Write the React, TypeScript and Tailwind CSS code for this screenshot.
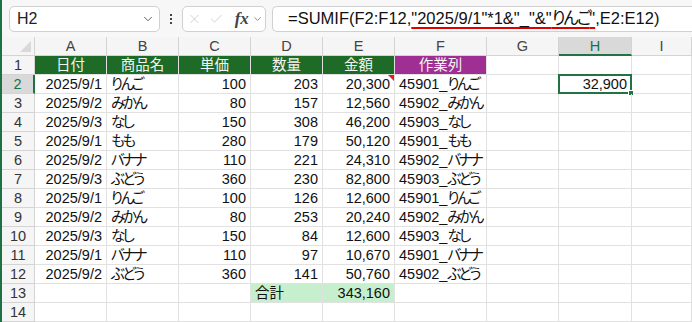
import { ChevronDown, X, Check } from 'lucide-react';

type Row = [string, string, string, string, string, string];

const rows: Row[] = [
  ['2025/9/1', 'りんご', '100', '203', '20,300', '45901_りんご'],
  ['2025/9/2', 'みかん', '80', '157', '12,560', '45902_みかん'],
  ['2025/9/3', 'なし', '150', '308', '46,200', '45903_なし'],
  ['2025/9/1', 'もも', '280', '179', '50,120', '45901_もも'],
  ['2025/9/2', 'バナナ', '110', '221', '24,310', '45902_バナナ'],
  ['2025/9/3', 'ぶどう', '360', '230', '82,800', '45903_ぶどう'],
  ['2025/9/1', 'りんご', '100', '126', '12,600', '45901_りんご'],
  ['2025/9/2', 'みかん', '80', '253', '20,240', '45902_みかん'],
  ['2025/9/3', 'なし', '150', '84', '12,600', '45903_なし'],
  ['2025/9/1', 'バナナ', '110', '97', '10,670', '45901_バナナ'],
  ['2025/9/2', 'ぶどう', '360', '141', '50,760', '45902_ぶどう'],
];

const cols = ['A', 'B', 'C', 'D', 'E', 'F', 'G', 'H', 'I'];
// corner, A-E, F (wider), G, H, I
const gridCols = 'grid grid-cols-[33px_72px_72px_72px_72px_72px_92px_72px_73px_1fr]';
const cell = 'h-[19px] border-r border-b border-[#e1e1e1] px-[4px] leading-[18px] whitespace-nowrap';
const rowHead = 'h-[19px] border-r border-b border-[#d4d4d4] bg-[#f5f5f5] text-center leading-[18px] text-[#333]';

// kana in the sheet font is narrower than Noto's, so tighten it
function Txt({ s }: { s: string }) {
  return (
    <>
      {s.split(/([\u3040-\u30ff]+)/).map((p, i) =>
        /[\u3040-\u30ff]/.test(p) ? (
          <span key={i} className="tracking-[-2.5px]">{p}</span>
        ) : (
          p
        )
      )}
    </>
  );
}

function FormulaBar() {
  return (
    <div className="flex h-[37px] items-center bg-[#f7f7f7] pl-[7px]">
      <div className="flex h-[26px] w-[151px] items-center justify-between rounded-[5px] border border-[#d0d0d0] bg-white pl-[7px] pr-[4px] text-[16px] text-[#222]">
        <span>H2</span>
        <ChevronDown size={14} strokeWidth={1.6} className="text-[#555]" />
      </div>
      <div className="flex w-[22px] flex-col items-center gap-[2px]">
        <span className="h-[2px] w-[2px] bg-[#444]" />
        <span className="h-[2px] w-[2px] bg-[#444]" />
        <span className="h-[2px] w-[2px] bg-[#444]" />
      </div>
      <div className="flex h-[26px] w-[84px] items-center rounded-[5px] border border-[#d0d0d0] bg-white pl-[4px] pr-[2px]">
        <X size={16} strokeWidth={1.1} className="text-[#bdbdbd]" />
        <Check size={16} strokeWidth={1.1} className="ml-[7px] text-[#bdbdbd]" />
        <span className="ml-[11px] font-['Liberation_Serif',serif] text-[17px] italic font-bold text-[#444]">fx</span>
        <ChevronDown size={12} strokeWidth={1.6} className="ml-[3px] text-[#666]" />
      </div>
      <div className="ml-[6px] flex h-[26px] flex-1 items-center rounded-l-[5px] border border-r-0 border-[#d0d0d0] bg-white pl-[15px] text-[16.5px] text-[#111]">
        <span>=SUMIF(F2:F12,</span>
        <span className="underline decoration-[#e00000] decoration-[1.5px] underline-offset-[3px]">
          "2025/9/1"*1&amp;"_"&amp;"<span className="tracking-[-2px]">りんご</span>"
        </span>
        <span>,E2:E12)</span>
      </div>
    </div>
  );
}

export default function App() {
  return (
    <div className="h-[322px] w-[692px] overflow-hidden border-l-2 border-[#1e7145] bg-white font-['Liberation_Sans','Noto_Sans_CJK_JP',sans-serif] text-[14.5px] text-[#111] [font-feature-settings:'palt']">
      <FormulaBar />
      <div className={gridCols}>
        <div className="relative h-[19px] border-r border-b border-[#d4d4d4] bg-[#f5f5f5]">
          <div className="absolute right-[3px] bottom-[3px] h-[11px] w-[11px] bg-[#d9d9d9] [clip-path:polygon(100%_0,100%_100%,0_100%)]" />
        </div>
        {cols.map(c => (
          <div
            key={c}
            className={
              c === 'H'
                ? 'h-[19px] border-r border-b-2 border-r-[#d4d4d4] border-b-[#217346] bg-[#d9d9d9] text-center leading-[18px] text-[#1e7145]'
                : 'h-[19px] border-r border-b border-[#d4d4d4] bg-[#f5f5f5] text-center leading-[18px] text-[#444]'
            }
          >
            {c}
          </div>
        ))}

        {/* row 1 */}
        <div className={rowHead}>1</div>
        {['日付', '商品名', '単価', '数量', '金額'].map(h => (
          <div key={h} className={`${cell} border-[#1f6b2a] bg-[#1e6b28] text-center text-[#f4f4f4]`}>
            {h}
          </div>
        ))}
        <div className={`${cell} border-[#9e2f92] bg-[#9f2f93] text-center text-[#f4f4f4]`}>作業列</div>
        <div className={cell} />
        <div className={cell} />
        <div className={cell} />

        {rows.map((r, i) => {
          const n = i + 2;
          const sel = n === 2;
          return [
            <div
              key={`h${n}`}
              className={
                sel
                  ? 'h-[19px] border-r-2 border-b border-r-[#217346] border-b-[#d4d4d4] bg-[#d9d9d9] text-center leading-[18px] text-[#1e7145]'
                  : rowHead
              }
            >
              {n}
            </div>,
            <div key={`a${n}`} className={`${cell} text-right`}>{r[0]}</div>,
            <div key={`b${n}`} className={`${cell} px-[1px]`}><Txt s={r[1]} /></div>,
            <div key={`c${n}`} className={`${cell} text-right`}>{r[2]}</div>,
            <div key={`d${n}`} className={`${cell} text-right`}>{r[3]}</div>,
            <div key={`e${n}`} className={`${cell} relative text-right`}>
              {sel && (
                <span className="absolute top-0 right-0 h-[6px] w-[6px] bg-[#e02020] [clip-path:polygon(0_0,100%_0,100%_100%)]" />
              )}
              {r[4]}
            </div>,
            <div key={`f${n}`} className={`${cell} px-[1px]`}><Txt s={r[5]} /></div>,
            <div key={`g${n}`} className={cell} />,
            <div key={`hh${n}`} className={`${cell} relative text-right`}>
              {sel && (
                <>
                  <span className="absolute -top-[1px] -left-[1px] h-[20px] w-[74px] border-2 border-[#217346]" />
                  <span className="absolute -right-[3px] -bottom-[3px] h-[6px] w-[6px] border border-white bg-[#217346]" />
                  <span className="relative">32,900</span>
                </>
              )}
            </div>,
            <div key={`i${n}`} className={cell} />,
          ];
        })}

        {/* row 13 */}
        <div className={rowHead}>13</div>
        <div className={cell} />
        <div className={cell} />
        <div className={cell} />
        <div className={`${cell} border-[#c6efce] bg-[#c6efce]`}>合計</div>
        <div className={`${cell} border-[#c6efce] bg-[#c6efce] text-right`}>343,160</div>
        <div className={cell} />
        <div className={cell} />
        <div className={cell} />
        <div className={cell} />

        {/* row 14 */}
        <div className={rowHead}>14</div>
        {Array.from({ length: 9 }).map((_, i) => (
          <div key={i} className={cell} />
        ))}
      </div>
    </div>
  );
}
